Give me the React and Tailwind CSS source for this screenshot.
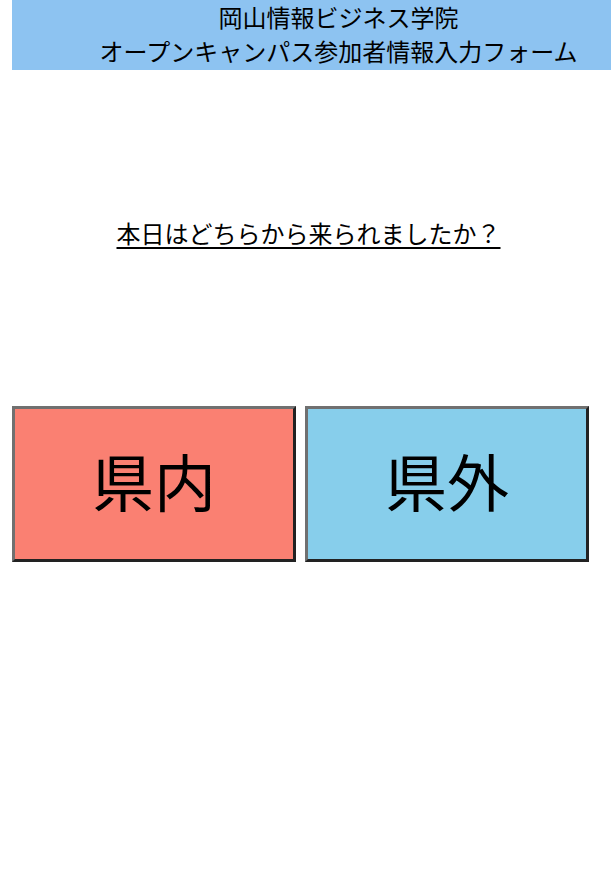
export default function App() {
  return (
    <div className="min-h-[882px] bg-white pl-3 text-black" style={{ fontFamily: '"Noto Sans CJK JP", "Noto Sans", sans-serif' }}>
      <header className="flex h-[70px] flex-col items-center justify-center bg-[#8dc3f1] pb-[3px] pl-[54px] text-[24px] leading-[34px]">
        <div>岡山情報ビジネス学院</div>
        <div>オープンキャンパス参加者情報入力フォーム</div>
      </header>

      <p className="mt-[146px] pr-[6px] text-center text-[24px] leading-[34px]">
        <span className="underline decoration-2 underline-offset-4">本日はどちらから来られましたか？</span>
      </p>

      <div className="mt-[156px] flex gap-[9px]">
        <button className="flex h-[156px] w-[284px] items-center justify-center border-[3px] border-t-[#707070] border-l-[#707070] border-b-[#222222] border-r-[#222222] bg-[#fa8072] pb-2 text-[62px] leading-none">
          県内
        </button>
        <button className="flex h-[156px] w-[284px] items-center justify-center border-[3px] border-t-[#707070] border-l-[#707070] border-b-[#222222] border-r-[#222222] bg-[#87ceeb] pb-2 text-[62px] leading-none">
          県外
        </button>
      </div>
    </div>
  );
}
